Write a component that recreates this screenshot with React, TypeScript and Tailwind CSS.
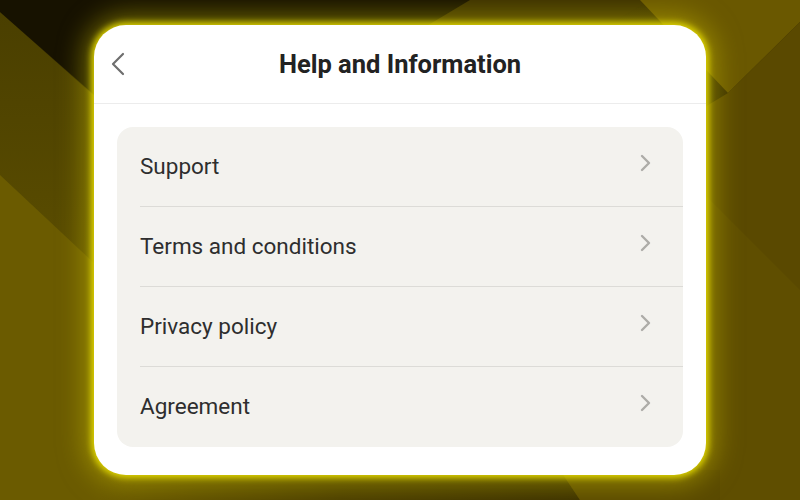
import React from "react";

const items = ["Support", "Terms and conditions", "Privacy policy", "Agreement"];

// decorative backdrop: dark olive facets behind the card
const Backdrop = () => (
  <svg className="absolute inset-0 h-full w-full" viewBox="0 0 800 500" preserveAspectRatio="none">
    <defs>
      <linearGradient id="base" x1="0" y1="0" x2="0" y2="1">
        <stop offset="0" stopColor="#3a3000" />
        <stop offset="1" stopColor="#4c3f00" />
      </linearGradient>
      <linearGradient id="left" x1="0" y1="0" x2="0" y2="1">
        <stop offset="0" stopColor="#4a3f00" />
        <stop offset="1" stopColor="#6a5a00" />
      </linearGradient>
      <linearGradient id="bottom" x1="0" y1="0" x2="1" y2="0">
        <stop offset="0" stopColor="#6a5a00" />
        <stop offset="0.5" stopColor="#4a3d00" />
        <stop offset="1" stopColor="#3a2f00" />
      </linearGradient>
    </defs>
    <rect width="800" height="500" fill="url(#base)" />
    <polygon points="0,12 110,110 110,500 0,500" fill="url(#left)" />
    <polygon points="0,175 110,278 110,500 0,500" fill="#6b5b00" />
    <polygon points="0,0 650,0 560,45 100,100 0,12" fill="#171200" />
    <polygon points="470,0 650,0 600,30 420,30" fill="#3c3100" />
    <polygon points="640,0 800,0 800,22 728,93" fill="#6a5800" />
    <polygon points="728,93 800,22 800,500 700,500 700,110" fill="#5a4900" />
    <polygon points="700,190 800,290 800,500 700,500" fill="#5f4e00" />
    <polygon points="100,470 560,470 580,500 100,500" fill="url(#bottom)" />
    <polygon points="560,470 720,470 720,500 580,500" fill="#5a4a00" />
  </svg>
);

const Chevron = ({ dir }: { dir: "left" | "right" }) => (
  <svg width="14" height="24" viewBox="0 0 14 24" fill="none">
    <path
      d={dir === "left" ? "M12 2 L2 12 L12 22" : "M3 4 L10 11 L3 18"}
      stroke="currentColor"
      strokeWidth={dir === "left" ? 2.2 : 2.4}
      strokeLinecap="round"
      strokeLinejoin="round"
    />
  </svg>
);

export default function App() {
  return (
    <div className="relative flex h-[500px] w-[800px] items-center justify-center overflow-hidden font-['Roboto',sans-serif]">
      <Backdrop />
      <div className="relative flex h-[450px] w-[612px] flex-col rounded-[32px] bg-white shadow-[0_0_6px_3px_rgba(228,218,0,0.9),0_0_26px_10px_rgba(200,188,0,0.5)]">
        <div className="relative flex h-[79px] items-center justify-center border-b border-[#ececec]">
          <span className="absolute left-[17px] top-[27px] text-[#6e6e6e]">
            <Chevron dir="left" />
          </span>
          <h1 className="text-[25.5px] font-bold text-[#222]">Help and Information</h1>
        </div>
        <div className="px-[23px] pt-[23px]">
          <div className="overflow-hidden rounded-[16px] bg-[#f3f2ee]">
            {items.map((label, i) => (
              <div key={label} className="pl-[23px]">
                <div
                  className={`flex h-[80px] items-center justify-between pr-[30px] ${
                    i < items.length - 1 ? "border-b border-[#dcdbd7]" : ""
                  }`}
                >
                  <span className="text-[22.5px] text-[#2e2e2e]">{label}</span>
                  <span className="-mt-[6px] text-[#adaca8]">
                    <Chevron dir="right" />
                  </span>
                </div>
              </div>
            ))}
          </div>
        </div>
      </div>
    </div>
  );
}
